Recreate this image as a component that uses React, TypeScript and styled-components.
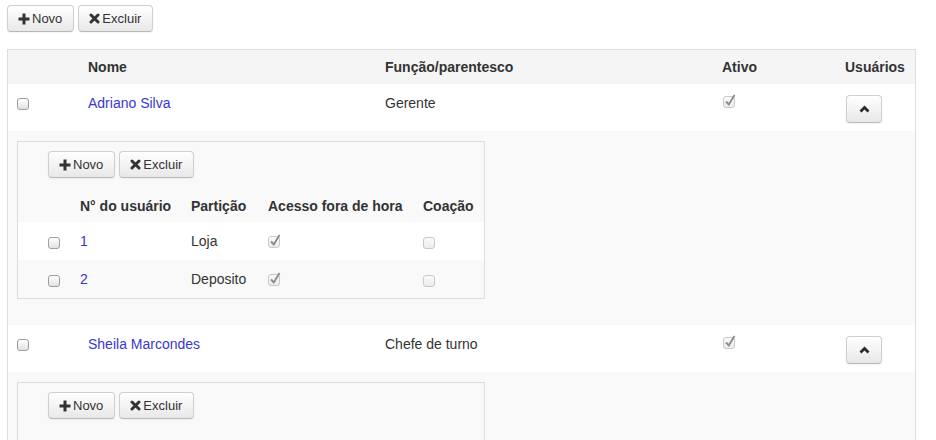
import React from 'react';
import styled, { createGlobalStyle } from 'styled-components';

const Global = createGlobalStyle`
  html, body { margin: 0; padding: 0; background: #fff; }
  body {
    font-family: "Liberation Sans", Arial, Helvetica, sans-serif;
    font-size: 14px;
    line-height: 20px;
    color: #333;
  }
`;

const Page = styled.div`
  padding: 5px 0 0 7px;
  width: 909px;
`;

const Toolbar = styled.div<{ $pad?: string }>`
  display: flex;
  gap: 4px;
  padding: ${p => p.$pad || '0'};
`;

const Button = styled.button`
  display: inline-flex;
  align-items: center;
  justify-content: center;
  box-sizing: border-box;
  height: 27px;
  padding: 0 11px 0 10px;
  border: 1px solid #cfcfcf;
  border-bottom-color: #b8b8b8;
  border-radius: 4px;
  background: linear-gradient(#ffffff, #e8e8e8);
  box-shadow: inset 0 1px 0 rgba(255, 255, 255, 0.3), 0 1px 2px rgba(0, 0, 0, 0.05);
  font-family: "Liberation Sans", Arial, Helvetica, sans-serif;
  font-size: 13px;
  color: #333;
  cursor: pointer;
  gap: 2px;
`;

const ToggleButton = styled(Button)`
  width: 36px;
  height: 28px;
  padding: 0;
  margin: 3px 0 0 0;
`;

const Table = styled.table`
  width: 909px;
  table-layout: fixed;
  border-collapse: separate;
  border-spacing: 0;
  border: 1px solid #ddd;
  border-bottom: none;
  margin-top: 17px;
`;

const Th = styled.th`
  text-align: left;
  font-weight: bold;
  padding: 8px;
  line-height: 18px;
  background: #f5f5f5;
`;

const Td = styled.td<{ $pl?: number; $pt?: number }>`
  padding: 8px;
  ${p => (p.$pl !== undefined ? `padding-left: ${p.$pl}px;` : '')}
  ${p => (p.$pt !== undefined ? `padding-top: ${p.$pt}px;` : '')}
  vertical-align: top;
  background: #fff;
`;

const DetailTd = styled.td`
  padding: 10px 9px 26px 9px;
  background: #f9f9f9;
`;

const Panel = styled.div`
  width: 468px;
  box-sizing: border-box;
  border: 1px solid #ddd;
  background: #f9f9f9;
`;

const InnerTable = styled.table`
  width: 466px;
  table-layout: fixed;
  border-collapse: separate;
  border-spacing: 0;
  margin-top: 8px;
`;

const InnerTh = styled.th`
  text-align: left;
  font-weight: bold;
  padding: 10px 8px 6px 8px;
  line-height: 20px;
  white-space: nowrap;
`;

const InnerTr = styled.tr<{ $odd: boolean }>`
  background: ${p => (p.$odd ? '#fff' : '#f9f9f9')};
`;

const InnerTd = styled.td<{ $pl?: number }>`
  padding: 9px 8px;
  ${p => (p.$pl !== undefined ? `padding-left: ${p.$pl}px;` : '')}
  line-height: 20px;
  vertical-align: top;
`;

const Link = styled.a`
  color: #3838d0;
  text-decoration: none;
`;

const Box = styled.span<{ $disabled?: boolean; $mt?: number; $ml?: number }>`
  position: relative;
  display: block;
  width: 12px;
  height: 12px;
  box-sizing: border-box;
  margin-top: ${p => p.$mt ?? 4}px;
  margin-left: ${p => p.$ml ?? 0}px;
  border: 1px solid ${p => (p.$disabled ? '#c9c9c9' : '#9e9e9e')};
  border-radius: 3px;
  background: ${p => (p.$disabled ? 'linear-gradient(#fafafa, #ececec)' : 'linear-gradient(#ffffff, #e2e2e2)')};
`;

const CheckMark = styled.svg`
  position: absolute;
  left: 0px;
  top: -4px;
  overflow: visible;
`;

function Checkbox({ checked, disabled, mt, ml }: { checked?: boolean; disabled?: boolean; mt?: number; ml?: number }) {
  return (
    <Box $disabled={disabled} $mt={mt} $ml={ml}>
      {checked && (
        <CheckMark width="12" height="14" viewBox="0 0 12 14">
          <path d="M2 8.5 L4.8 11.5 L10.5 2" fill="none" stroke="#8c8c8c" strokeWidth="1.9" strokeLinejoin="miter" />
        </CheckMark>
      )}
    </Box>
  );
}

const PlusIcon = () => (
  <svg width="12" height="12" viewBox="0 0 12 12">
    <path d="M4.5 0.5h3v4h4v3h-4v4h-3v-4h-4v-3h4z" fill="#333" />
  </svg>
);

const XIcon = () => (
  <svg width="11" height="11" viewBox="0 0 11 11">
    <path d="M2 2 L9 9 M9 2 L2 9" stroke="#333" strokeWidth="3" strokeLinecap="round" />
  </svg>
);

const ChevronUp = () => (
  <svg width="11" height="8" viewBox="0 0 11 8">
    <path d="M1.5 6.5 L5.5 2.5 L9.5 6.5" fill="none" stroke="#2b2b2b" strokeWidth="2.8" strokeLinejoin="miter" />
  </svg>
);

function Actions({ pad }: { pad?: string }) {
  return (
    <Toolbar $pad={pad}>
      <Button>
        <PlusIcon />
        Novo
      </Button>
      <Button>
        <XIcon />
        Excluir
      </Button>
    </Toolbar>
  );
}

type Usuario = { num: string; particao: string; acesso: boolean; coacao: boolean };
type Pessoa = { nome: string; funcao: string; ativo: boolean; usuarios: Usuario[] };

const pessoas: Pessoa[] = [
  {
    nome: 'Adriano Silva',
    funcao: 'Gerente',
    ativo: true,
    usuarios: [
      { num: '1', particao: 'Loja', acesso: true, coacao: false },
      { num: '2', particao: 'Deposito', acesso: true, coacao: false },
    ],
  },
  {
    nome: 'Sheila Marcondes',
    funcao: 'Chefe de turno',
    ativo: true,
    usuarios: [
      { num: '1', particao: 'Loja', acesso: true, coacao: false },
      { num: '2', particao: 'Deposito', acesso: true, coacao: false },
    ],
  },
];

function UsuariosPanel({ usuarios }: { usuarios: Usuario[] }) {
  return (
    <Panel>
      <Actions pad="9px 0 0 30px" />
      <InnerTable>
        <colgroup>
          <col style={{ width: 54 }} />
          <col style={{ width: 111 }} />
          <col style={{ width: 77 }} />
          <col style={{ width: 155 }} />
          <col style={{ width: 69 }} />
        </colgroup>
        <thead>
          <tr>
            <InnerTh />
            <InnerTh>N° do usuário</InnerTh>
            <InnerTh>Partição</InnerTh>
            <InnerTh>Acesso fora de hora</InnerTh>
            <InnerTh>Coação</InnerTh>
          </tr>
        </thead>
        <tbody>
          {usuarios.map((u, i) => (
            <InnerTr key={u.num} $odd={i % 2 === 0}>
              <InnerTd $pl={30}>
                <Checkbox mt={6} />
              </InnerTd>
              <InnerTd>
                <Link href="#">{u.num}</Link>
              </InnerTd>
              <InnerTd>{u.particao}</InnerTd>
              <InnerTd>
                <Checkbox checked={u.acesso} disabled mt={5} />
              </InnerTd>
              <InnerTd>
                <Checkbox checked={u.coacao} disabled mt={6} />
              </InnerTd>
            </InnerTr>
          ))}
        </tbody>
      </InnerTable>
    </Panel>
  );
}

export default function App() {
  return (
    <>
      <Global />
      <Page>
        <Actions />
        <Table>
          <colgroup>
            <col style={{ width: 72 }} />
            <col style={{ width: 297 }} />
            <col style={{ width: 337 }} />
            <col style={{ width: 123 }} />
            <col style={{ width: 78 }} />
          </colgroup>
          <thead>
            <tr>
              <Th />
              <Th>Nome</Th>
              <Th>Função/parentesco</Th>
              <Th>Ativo</Th>
              <Th>Usuários</Th>
            </tr>
          </thead>
          <tbody>
            {pessoas.map(p => (
              <React.Fragment key={p.nome}>
                <tr>
                  <Td $pl={9}>
                    <Checkbox mt={6} />
                  </Td>
                  <Td $pt={9}>
                    <Link href="#">{p.nome}</Link>
                  </Td>
                  <Td $pt={9}>{p.funcao}</Td>
                  <Td>
                    <Checkbox checked={p.ativo} disabled mt={4} ml={1} />
                  </Td>
                  <Td $pl={9}>
                    <ToggleButton>
                      <ChevronUp />
                    </ToggleButton>
                  </Td>
                </tr>
                <tr>
                  <DetailTd colSpan={5}>
                    <UsuariosPanel usuarios={p.usuarios} />
                  </DetailTd>
                </tr>
              </React.Fragment>
            ))}
          </tbody>
        </Table>
      </Page>
    </>
  );
}
